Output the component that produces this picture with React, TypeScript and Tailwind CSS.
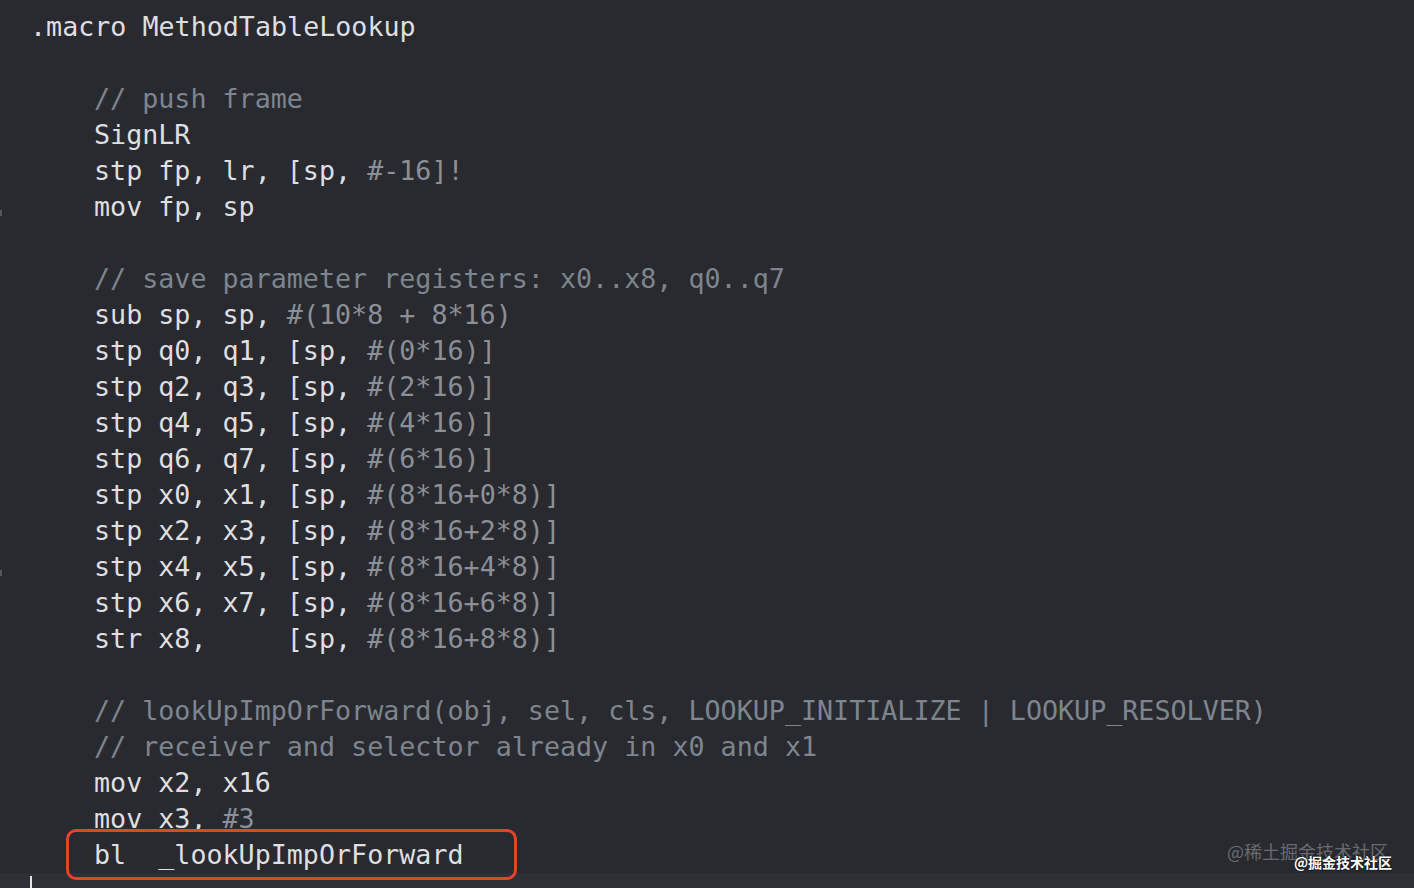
type Seg = { t: string; c?: 'code' | 'comment' | 'lit' };
type Line = { indent: boolean; segs: Seg[] };

const code = (t: string): Seg => ({ t, c: 'code' });
const comment = (t: string): Seg => ({ t, c: 'comment' });
const lit = (t: string): Seg => ({ t, c: 'lit' });

const lines: Line[] = [
  { indent: false, segs: [code('.macro MethodTableLookup')] },
  { indent: false, segs: [] },
  { indent: true, segs: [comment('// push frame')] },
  { indent: true, segs: [code('SignLR')] },
  { indent: true, segs: [code('stp fp, lr, [sp, '), lit('#-16]!')] },
  { indent: true, segs: [code('mov fp, sp')] },
  { indent: false, segs: [] },
  { indent: true, segs: [comment('// save parameter registers: x0..x8, q0..q7')] },
  { indent: true, segs: [code('sub sp, sp, '), lit('#(10*8 + 8*16)')] },
  { indent: true, segs: [code('stp q0, q1, [sp, '), lit('#(0*16)]')] },
  { indent: true, segs: [code('stp q2, q3, [sp, '), lit('#(2*16)]')] },
  { indent: true, segs: [code('stp q4, q5, [sp, '), lit('#(4*16)]')] },
  { indent: true, segs: [code('stp q6, q7, [sp, '), lit('#(6*16)]')] },
  { indent: true, segs: [code('stp x0, x1, [sp, '), lit('#(8*16+0*8)]')] },
  { indent: true, segs: [code('stp x2, x3, [sp, '), lit('#(8*16+2*8)]')] },
  { indent: true, segs: [code('stp x4, x5, [sp, '), lit('#(8*16+4*8)]')] },
  { indent: true, segs: [code('stp x6, x7, [sp, '), lit('#(8*16+6*8)]')] },
  { indent: true, segs: [code('str x8,     [sp, '), lit('#(8*16+8*8)]')] },
  { indent: false, segs: [] },
  {
    indent: true,
    segs: [comment('// lookUpImpOrForward(obj, sel, cls, LOOKUP_INITIALIZE | LOOKUP_RESOLVER)')],
  },
  { indent: true, segs: [comment('// receiver and selector already in x0 and x1')] },
  { indent: true, segs: [code('mov x2, x16')] },
  { indent: true, segs: [code('mov x3, '), lit('#3')] },
  { indent: true, segs: [code('bl  _lookUpImpOrForward')] },
];

const segClass = {
  code: 'text-[#dfdfe0]',
  comment: 'text-[#7e858e]',
  lit: 'text-[#8b9098]',
};

const App = () => {
  return (
    <div className="relative w-full h-[888px] overflow-hidden bg-[#292a2f] font-['DejaVu_Sans_Mono',monospace] text-[26.7px]">
      <div className="flex flex-col pt-[9px] pl-[30px]">
        {lines.map((line, i) => (
          <div
            key={i}
            className={`h-[36px] leading-[36px] whitespace-pre ${line.indent ? 'pl-[64px]' : ''}`}
          >
            {line.segs.map((s, j) => (
              <span key={j} className={segClass[s.c ?? 'code']}>
                {s.t}
              </span>
            ))}
          </div>
        ))}
        {/* current line */}
        <div className="-ml-[30px] h-[36px] bg-[#2f3035] pl-[30px] pt-[3px]">
          <div className="w-[2px] h-[30px] bg-[#e6e6e6]" />
        </div>
      </div>

      {/* gutter marks */}
      <div className="absolute left-0 top-[210px] w-[2px] h-[6px] bg-[#55575d]" />
      <div className="absolute left-0 top-[570px] w-[2px] h-[6px] bg-[#55575d]" />

      {/* highlight box */}
      <div className="absolute left-[66px] top-[829px] w-[451px] h-[51px] rounded-[10px] border-[3.5px] border-[#e5432c]" />

      {/* watermarks */}
      <div className="absolute left-[1227px] top-[838px] text-[18px] leading-[26px] text-[#686b72] font-['Noto_Sans_CJK_SC',sans-serif] whitespace-nowrap">
        @稀土掘金技术社区
      </div>
      <div className="absolute left-[1294px] top-[852px] text-[14px] leading-[20px] font-bold text-white font-['Noto_Sans_CJK_SC',sans-serif] whitespace-nowrap [text-shadow:0_0_2px_#000]">
        @掘金技术社区
      </div>
    </div>
  );
};

export default App;
